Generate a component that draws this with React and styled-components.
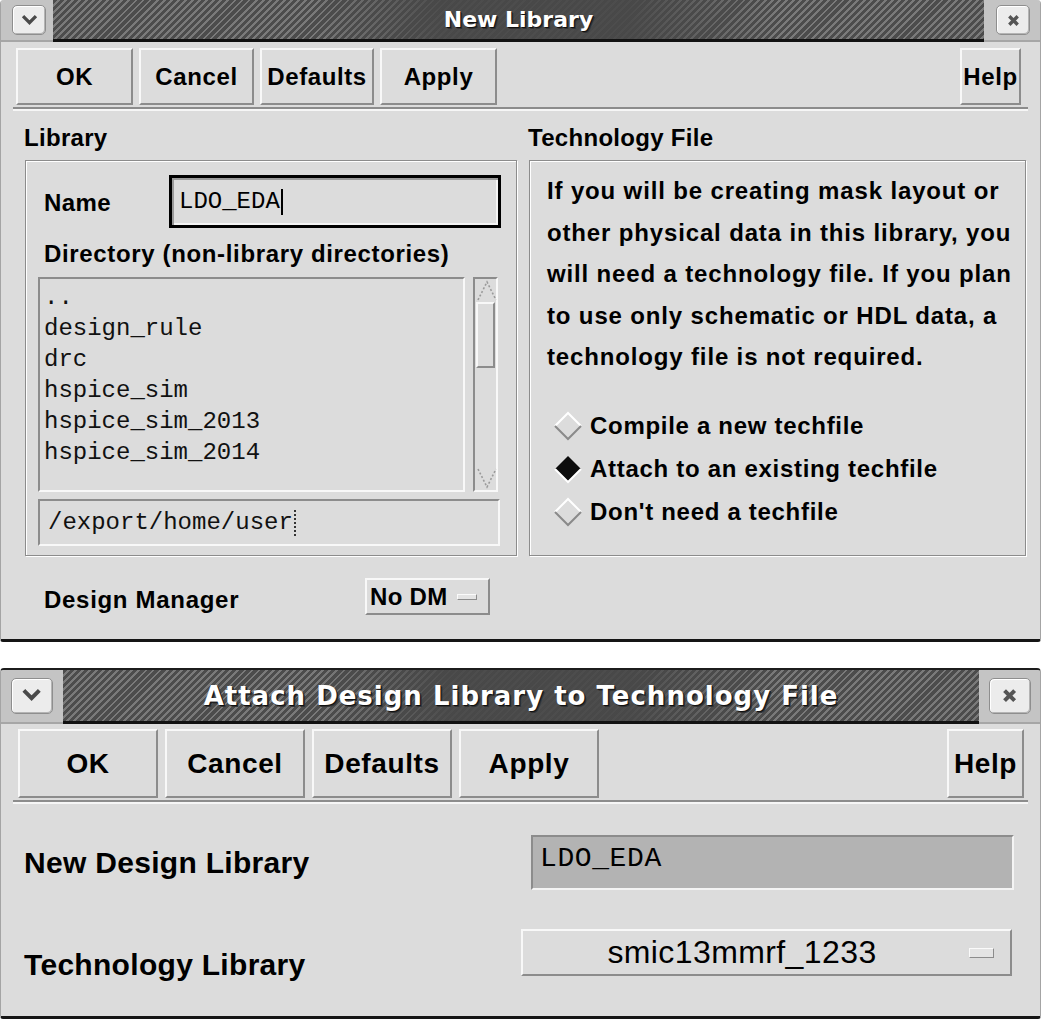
import React from "react";
import styled, { createGlobalStyle } from "styled-components";

const GlobalStyle = createGlobalStyle`
  html, body {
    margin: 0;
    padding: 0;
    background: #ffffff;
  }
  body {
    width: 1041px;
    height: 1019px;
    overflow: hidden;
    font-family: "Liberation Sans", Arial, sans-serif;
  }
`;

const directories = [
  "..",
  "design_rule",
  "drc",
  "hspice_sim",
  "hspice_sim_2013",
  "hspice_sim_2014",
];

const techText = [
  "If you will be creating mask layout or",
  "other physical data in this library, you",
  "will need a technology file. If you plan",
  "to use only schematic or HDL data, a",
  "technology file is not required.",
];

const techOptions = [
  { label: "Compile a new techfile", selected: false },
  { label: "Attach to an existing techfile", selected: true },
  { label: "Don't need a techfile", selected: false },
];

function ChevronIcon({ size }) {
  return (
    <svg width={size} height={size} viewBox='0 0 20 20'>
      <path
        d='M5 7 L10 12 L15 7'
        fill='none'
        stroke='#4a4a4a'
        strokeWidth='3.2'
        strokeLinecap='square'
      />
    </svg>
  );
}

function CloseIcon({ size }) {
  return (
    <svg width={size} height={size} viewBox='0 0 20 20'>
      <path
        d='M6 6 L14 14 M14 6 L6 14'
        fill='none'
        stroke='#555555'
        strokeWidth='3.2'
      />
    </svg>
  );
}

function Diamond({ selected }) {
  if (selected) {
    return (
      <svg width='30' height='30' viewBox='0 0 30 30'>
        <polygon points='15,2 28,15 15,28 2,15' fill='#0c0c0c' />
        <path d='M28 15 L15 28 L2 15' fill='none' stroke='#ffffff' strokeWidth='2' />
      </svg>
    );
  }
  return (
    <svg width='30' height='30' viewBox='0 0 30 30'>
      <path d='M2 15 L15 2 L28 15' fill='none' stroke='#ffffff' strokeWidth='2' />
      <path d='M28 15 L15 28 L2 15' fill='none' stroke='#8a8a8a' strokeWidth='2' />
    </svg>
  );
}

function TitleBar({ title, height, fontSize, leftSlot, rightSlot, btnW, btnH, topEdge }) {
  return (
    <TitleFrame $h={height} $topEdge={topEdge}>
      <CornerSlot $w={leftSlot.w} $justify='flex-end' $pad={leftSlot.pad}>
        <WinButton $w={btnW} $h={btnH}>
          <ChevronIcon size={btnH * 0.7} />
        </WinButton>
      </CornerSlot>
      <Stripe>
        <TitleText $fs={fontSize}>{title}</TitleText>
      </Stripe>
      <CornerSlot $w={rightSlot.w} $justify='flex-start' $pad={rightSlot.pad}>
        <WinButton $w={btnW} $h={btnH}>
          <CloseIcon size={btnH * 0.7} />
        </WinButton>
      </CornerSlot>
    </TitleFrame>
  );
}

function ActionBar({ widths, helpWidth, height, fontSize, padLeft, padRight, padTop, gap }) {
  const labels = ["OK", "Cancel", "Defaults", "Apply"];
  return (
    <>
      <ButtonRow $pl={padLeft} $pr={padRight} $pt={padTop} $gap={gap}>
        {labels.map((label, i) => (
          <PushButton key={label} $w={widths[i]} $h={height} $fs={fontSize}>
            {label}
          </PushButton>
        ))}
        <Spacer />
        <PushButton $w={helpWidth} $h={height} $fs={fontSize}>
          Help
        </PushButton>
      </ButtonRow>
      <Separator />
    </>
  );
}

function NewLibraryDialog() {
  return (
    <Window $h={642}>
      <TitleBar
        title='New Library'
        height={42}
        fontSize={22}
        leftSlot={{ w: 52, pad: 7 }}
        rightSlot={{ w: 56, pad: 12 }}
        btnW={34}
        btnH={30}
      />
      <ActionBar
        widths={[117, 115, 114, 117]}
        helpWidth={61}
        height={57}
        fontSize={24}
        padLeft={15}
        padRight={19}
        padTop={6}
        gap={6}
      />
      <Columns>
        <Column>
          <Heading>Library</Heading>
          <GroupBox $w={492}>
            <LibraryInner>
              <NameRow>
                <FieldLabel>Name</FieldLabel>
                <NameInput>
                  LDO_EDA
                  <TextCursor />
                </NameInput>
              </NameRow>
              <SubLabel>Directory (non-library directories)</SubLabel>
              <ListRow>
                <ListBox>
                  {directories.map((d) => (
                    <ListItem key={d}>{d}</ListItem>
                  ))}
                </ListBox>
                <ScrollTrack>
                  <ScrollArrow viewBox='0 0 22 22' width='22' height='22'>
                    <path
                      d='M2 20 L11 2 L20 20'
                      fill='none'
                      stroke='#9a9a9a'
                      strokeWidth='1.6'
                      strokeDasharray='2 2'
                    />
                  </ScrollArrow>
                  <ScrollThumb />
                  <Spacer />
                  <ScrollArrow viewBox='0 0 22 22' width='22' height='22'>
                    <path
                      d='M2 2 L11 20 L20 2'
                      fill='none'
                      stroke='#9a9a9a'
                      strokeWidth='1.6'
                      strokeDasharray='2 2'
                    />
                  </ScrollArrow>
                </ScrollTrack>
              </ListRow>
              <PathField>
                /export/home/user
                <TextCursor $dotted />
              </PathField>
            </LibraryInner>
          </GroupBox>
        </Column>
        <Column>
          <Heading>Technology File</Heading>
          <GroupBox $w={497}>
            <TechInner>
              {techText.map((line) => (
                <ParaLine key={line}>{line}</ParaLine>
              ))}
              <RadioList>
                {techOptions.map((opt) => (
                  <RadioRow key={opt.label}>
                    <Diamond selected={opt.selected} />
                    <RadioLabel>{opt.label}</RadioLabel>
                  </RadioRow>
                ))}
              </RadioList>
            </TechInner>
          </GroupBox>
        </Column>
      </Columns>
      <ManagerRow>
        <ManagerLabel>Design Manager</ManagerLabel>
        <OptionButton>
          No DM
          <SmallIndicator $w={20} $h={6} />
        </OptionButton>
      </ManagerRow>
    </Window>
  );
}

function AttachDialog() {
  return (
    <Window $h={351} $topEdge>
      <TitleBar
        title='Attach Design Library to Technology File'
        height={54}
        fontSize={26}
        leftSlot={{ w: 62, pad: 10 }}
        rightSlot={{ w: 61, pad: 10 }}
        btnW={42}
        btnH={36}
      />
      <ActionBar
        widths={[140, 140, 140, 140]}
        helpWidth={77}
        height={69}
        fontSize={28}
        padLeft={17}
        padRight={16}
        padTop={5}
        gap={7}
      />
      <AttachBody>
        <AttachRow $mt={31} $h={55} $align='center'>
          <BigLabel>New Design Library</BigLabel>
          <ReadOnlyField>LDO_EDA</ReadOnlyField>
        </AttachRow>
        <AttachRow $mt={39} $h={47} $align='flex-start'>
          <BigLabel $mt={18}>Technology Library</BigLabel>
          <CyclicButton>
            <CyclicText>smic13mmrf_1233</CyclicText>
            <SmallIndicator $w={25} $h={10} />
          </CyclicButton>
        </AttachRow>
      </AttachBody>
    </Window>
  );
}

function App() {
  return (
    <>
      <GlobalStyle />
      <Page>
        <NewLibraryDialog />
        <AttachDialog />
      </Page>
    </>
  );
}

const Page = styled.div`
  display: flex;
  flex-direction: column;
  gap: 26px;
  width: 1041px;
`;

const Window = styled.div`
  display: flex;
  flex-direction: column;
  box-sizing: border-box;
  height: ${(p) => p.$h}px;
  background: #dcdcdc;
  border-top: ${(p) => (p.$topEdge ? "2px solid #1c1c1c" : "none")};
  border-bottom: 3px solid #151515;
  border-left: 1px solid #a4a4a4;
  border-right: 1px solid #a4a4a4;
  border-radius: 4px 4px 3px 3px;
  overflow: hidden;
`;

const TitleFrame = styled.div`
  display: flex;
  height: ${(p) => p.$h}px;
  flex-shrink: 0;
  background: #c4c4c4;
`;

const CornerSlot = styled.div`
  display: flex;
  align-items: center;
  justify-content: ${(p) => p.$justify};
  width: ${(p) => p.$w}px;
  padding: 0 ${(p) => (p.$justify === "flex-end" ? p.$pad : 0)}px 0
    ${(p) => (p.$justify === "flex-start" ? p.$pad : 0)}px;
  box-sizing: border-box;
  flex-shrink: 0;
  border-bottom: 2px solid #a6a6a6;
`;

const WinButton = styled.div`
  display: flex;
  align-items: center;
  justify-content: center;
  width: ${(p) => p.$w}px;
  height: ${(p) => p.$h}px;
  box-sizing: border-box;
  border-radius: 5px;
  background: #ececec;
  border: 1px solid #8e8e8e;
  box-shadow: inset 1px 1px 0 #ffffff, inset -1px -1px 0 #b4b4b4;
`;

const Stripe = styled.div`
  flex: 1;
  display: flex;
  align-items: center;
  justify-content: center;
  border-bottom: 3px solid #121212;
  background:
    linear-gradient(
      90deg,
      rgba(72, 72, 72, 0) 28%,
      rgba(72, 72, 72, 0.9) 42%,
      rgba(72, 72, 72, 0.9) 62%,
      rgba(72, 72, 72, 0) 78%
    ),
    repeating-linear-gradient(
      135deg,
      #4c4c4c 0px,
      #4c4c4c 3px,
      #7a7a7a 3px,
      #7a7a7a 5px
    );
`;

const TitleText = styled.div`
  font-family: "DejaVu Sans", "Liberation Sans", sans-serif;
  font-weight: bold;
  font-size: ${(p) => p.$fs}px;
  letter-spacing: ${(p) => (p.$fs > 24 ? 1 : 0)}px;
  color: #ffffff;
  text-shadow: 1px 1px 0 #111111, 2px 2px 0 #333333;
  white-space: nowrap;
`;

const ButtonRow = styled.div`
  display: flex;
  align-items: flex-start;
  gap: ${(p) => p.$gap}px;
  padding: ${(p) => p.$pt}px ${(p) => p.$pr}px 0 ${(p) => p.$pl}px;
`;

const Spacer = styled.div`
  flex: 1;
`;

const PushButton = styled.button`
  width: ${(p) => p.$w}px;
  height: ${(p) => p.$h}px;
  box-sizing: border-box;
  padding: 0;
  background: #dcdcdc;
  border: 2px solid;
  border-color: #f8f8f8 #8c8c8c #8c8c8c #f8f8f8;
  font-family: "Liberation Sans", Arial, sans-serif;
  font-weight: bold;
  font-size: ${(p) => p.$fs}px;
  letter-spacing: 0.6px;
  color: #000000;
`;

const Separator = styled.div`
  margin: 2px 12px 0 12px;
  border-top: 2px solid #8c8c8c;
  border-bottom: 2px solid #f6f6f6;
`;

const Columns = styled.div`
  display: grid;
  grid-template-columns: 494px 498px;
  column-gap: 10px;
  padding: 11px 0 0 23px;
`;

const Column = styled.div`
  display: flex;
  flex-direction: column;
`;

const Heading = styled.div`
  height: 32px;
  line-height: 32px;
  font-weight: bold;
  font-size: 24px;
  letter-spacing: 0.3px;
  color: #000000;
`;

const GroupBox = styled.div`
  width: ${(p) => p.$w}px;
  height: 396px;
  margin: 6px 0 0 1px;
  box-sizing: border-box;
  border: 1px solid #8c8c8c;
  box-shadow: inset 1px 1px 0 #ffffff, 1px 1px 0 #ffffff;
`;

const LibraryInner = styled.div`
  display: flex;
  flex-direction: column;
  padding: 14px 15px 0 12px;
`;

const NameRow = styled.div`
  display: flex;
  align-items: center;
  height: 53px;
`;

const FieldLabel = styled.div`
  width: 126px;
  padding-left: 6px;
  font-weight: bold;
  font-size: 24px;
  letter-spacing: 0.4px;
  padding-top: 2px;
`;

const NameInput = styled.div`
  display: flex;
  align-items: center;
  width: 332px;
  height: 53px;
  flex-shrink: 0;
  box-sizing: border-box;
  padding-left: 7px;
  border: 3px solid #000000;
  background: #dcdcdc;
  box-shadow: inset 2px 2px 0 #9a9a9a, inset -2px -2px 0 #f4f4f4;
  font-family: "Liberation Mono", "DejaVu Sans Mono", monospace;
  font-size: 24px;
  color: #000000;
`;

const TextCursor = styled.span`
  display: inline-block;
  width: 0;
  height: 26px;
  margin-left: 1px;
  border-left: 2px ${(p) => (p.$dotted ? "dotted #333333" : "solid #000000")};
`;

const SubLabel = styled.div`
  margin-top: 12px;
  padding-left: 6px;
  line-height: 28px;
  font-weight: bold;
  font-size: 24px;
  letter-spacing: 0.65px;
`;

const ListRow = styled.div`
  display: flex;
  gap: 8px;
  height: 215px;
  margin-top: 9px;
`;

const ListBox = styled.div`
  width: 427px;
  box-sizing: border-box;
  padding: 3px 0 0 4px;
  border: 2px solid;
  border-color: #8c8c8c #f8f8f8 #f8f8f8 #8c8c8c;
`;

const ListItem = styled.div`
  line-height: 31px;
  height: 31px;
  font-family: "Liberation Mono", "DejaVu Sans Mono", monospace;
  font-size: 24px;
  color: #111111;
  white-space: pre;
`;

const ScrollTrack = styled.div`
  display: flex;
  flex-direction: column;
  width: 25px;
  box-sizing: border-box;
  padding: 1px 0 1px 1px;
  border: 2px solid;
  border-color: #8c8c8c #f8f8f8 #f8f8f8 #8c8c8c;
`;

const ScrollArrow = styled.svg`
  display: block;
  flex-shrink: 0;
`;

const ScrollThumb = styled.div`
  height: 66px;
  margin-right: 1px;
  box-sizing: border-box;
  border: 2px solid;
  border-color: #f8f8f8 #8c8c8c #8c8c8c #f8f8f8;
`;

const PathField = styled.div`
  display: flex;
  align-items: center;
  margin-top: 7px;
  width: 462px;
  height: 47px;
  box-sizing: border-box;
  padding-left: 8px;
  border: 2px solid;
  border-color: #8c8c8c #f8f8f8 #f8f8f8 #8c8c8c;
  font-family: "Liberation Mono", "DejaVu Sans Mono", monospace;
  font-size: 24px;
  color: #111111;
`;

const TechInner = styled.div`
  display: flex;
  flex-direction: column;
  padding: 9px 10px 0 17px;
`;

const ParaLine = styled.div`
  height: 41.6px;
  line-height: 41.6px;
  font-weight: bold;
  font-size: 24px;
  letter-spacing: 0.85px;
  white-space: nowrap;
`;

const RadioList = styled.div`
  display: flex;
  flex-direction: column;
  margin-top: 27px;
`;

const RadioRow = styled.div`
  display: flex;
  align-items: center;
  gap: 7px;
  height: 43px;
  padding-left: 6px;
`;

const RadioLabel = styled.span`
  font-weight: bold;
  font-size: 24px;
  letter-spacing: 0.7px;
`;

const ManagerRow = styled.div`
  display: flex;
  align-items: center;
  height: 37px;
  margin-top: 22px;
  padding-left: 43px;
`;

const ManagerLabel = styled.div`
  width: 321px;
  padding-top: 7px;
  font-weight: bold;
  font-size: 24px;
  letter-spacing: 0.7px;
`;

const OptionButton = styled.div`
  display: flex;
  align-items: center;
  gap: 10px;
  width: 125px;
  height: 37px;
  box-sizing: border-box;
  padding-left: 3px;
  border: 2px solid;
  border-color: #f8f8f8 #8c8c8c #8c8c8c #f8f8f8;
  font-weight: bold;
  font-size: 24px;
  letter-spacing: 0.3px;
`;

const SmallIndicator = styled.span`
  display: inline-block;
  width: ${(p) => p.$w}px;
  height: ${(p) => p.$h}px;
  box-sizing: border-box;
  background: #e4e4e4;
  border: 1px solid;
  border-color: #fafafa #8c8c8c #8c8c8c #fafafa;
`;

const AttachBody = styled.div`
  display: flex;
  flex-direction: column;
  padding: 0 26px 0 23px;
`;

const AttachRow = styled.div`
  display: flex;
  align-items: ${(p) => p.$align};
  justify-content: space-between;
  height: ${(p) => p.$h}px;
  margin-top: ${(p) => p.$mt}px;
`;

const BigLabel = styled.div`
  margin-top: ${(p) => p.$mt || 0}px;
  line-height: 36px;
  font-weight: bold;
  font-size: 30px;
  letter-spacing: 0.3px;
  color: #000000;
`;

const ReadOnlyField = styled.div`
  display: flex;
  align-items: center;
  width: 483px;
  height: 55px;
  box-sizing: border-box;
  padding: 0 0 8px 7px;
  background: #b3b3b3;
  border: 2px solid;
  border-color: #8c8c8c #f4f4f4 #f4f4f4 #8c8c8c;
  font-family: "Liberation Mono", "DejaVu Sans Mono", monospace;
  font-size: 28px;
  letter-spacing: 0.6px;
  color: #000000;
`;

const CyclicButton = styled.div`
  display: flex;
  align-items: center;
  width: 491px;
  height: 47px;
  margin-right: 2px;
  box-sizing: border-box;
  border: 2px solid;
  border-color: #f8f8f8 #8c8c8c #8c8c8c #f8f8f8;
`;

const CyclicText = styled.div`
  width: 438px;
  text-align: center;
  font-size: 32px;
  letter-spacing: 0.4px;
  color: #000000;
  margin-right: 8px;
`;

export default App;
